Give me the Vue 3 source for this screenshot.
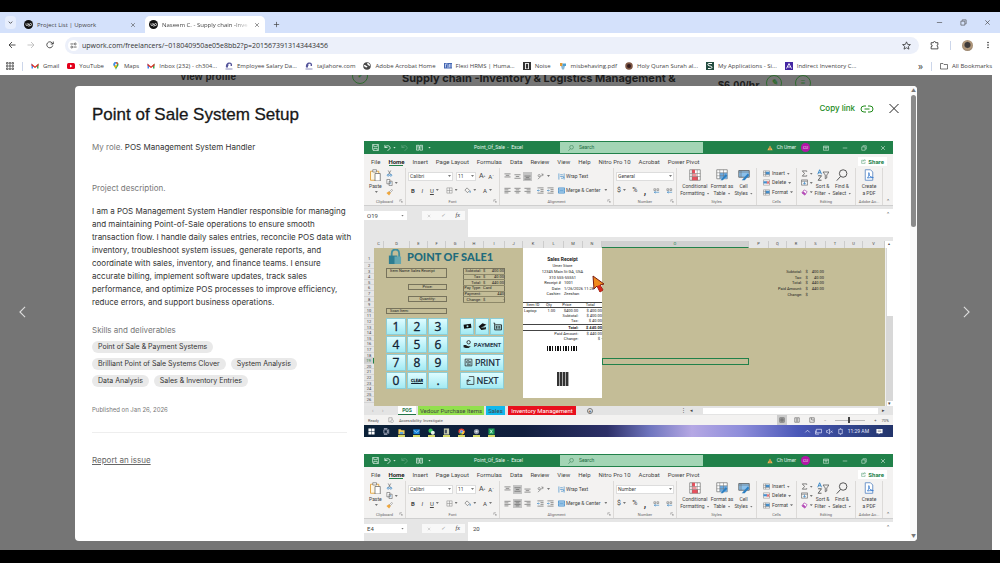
<script setup>
const icons = {
  apps: '<path d="M1 1h3v3H1zM6.500 1h3v3h-3zM12 1h3v3h-3zM1 6.500h3v3H1zM6.500 6.500h3v3h-3zM12 6.500h3v3h-3zM1 12h3v3H1zM6.500 12h3v3h-3zM12 12h3v3h-3z" fill="none" stroke="#333" stroke-width="1.300"/>',
  gmail: '<path d="M1 3v10h3V7z" fill="#4285f4"/><path d="M15 3v10h-3V7z" fill="#34a853"/><path d="M1 3l7 6 7-6v4l-7 5-7-5z" fill="#d93025"/>',
  youtube: '<rect y="2" width="16" height="12" rx="3" fill="#e3001b"/><path d="M6 5l5 3-5 3z" fill="#fff"/>',
  maps: '<path d="M8 0a5 5 0 0 0-5 5c0 4 4 5 5 11C9 10 13 9 13 5a5 5 0 0 0-5-5z" fill="#34a853"/><path d="M3 5a5 5 0 0 1 5-5v5l-4 4z" fill="#4285f4"/><path d="M8 0a5 5 0 0 1 4.500 3L9 6z" fill="#ea4335"/><path d="M4 9l4-4 2 3-3 4z" fill="#fbbc04"/><circle cx="8" cy="5" r="1.800" fill="#fff"/>',
  taj: '<path d="M2 11C1 5 4 1 9 1c4 0 6 3 5 7H6v3z" fill="#55559b"/><circle cx="9" cy="6" r="2.500" fill="#fff"/><path d="M1 13h14v2H1z" fill="#8d8dbd"/>',
  globe: '<circle cx="8" cy="8" r="7.500" fill="#484848"/><path d="M2 6c4-1 4 2 6 2s0 4-2 3-4-2-4-5zM9 2c4 0 5 3 5 5s-3 0-4-1-3-3-1-4z" fill="#fff"/>',
  flexi: '<path d="M0 2h16v11H0z" fill="#4365b0"/><path d="M3 11V4h4M8 12V5M11 4v7M14 4v7" stroke="#dbe5ff" stroke-width="1.500" fill="none"/>',
  noise: '<path d="M0 0h16v16H0z" fill="#333"/><path d="M4 3h8M5 3v10M11 3v10M4 13h3M9 13h3" stroke="#fff" stroke-width="1.700"/>',
  pdf: '<path d="M2 2h5v6H2z" fill="#e59a33"/><path d="M7 3h7v5H7z" fill="#4d9fd0"/><path d="M4 8h8l-2 7H6z" fill="#8bb8d5"/>',
  quran: '<circle cx="8" cy="8" r="7.500" fill="#7c5542"/><circle cx="8" cy="8" r="4" fill="#321b1d"/>',
  sims: '<path d="M0 0h16v16H0z" fill="#234d40"/><path d="M12 3H6C3 3 3 7 6 7.500l4 1c3 1 2 4.500-1 4.500H4" fill="none" stroke="#fff" stroke-width="2"/>',
  indirect: '<path d="M0 0h16v16H0z" fill="#4426a3"/><path d="M3 13L8 3l5 10M5 10h6" fill="none" stroke="#fff" stroke-width="1.800"/>',
  folder: '<path d="M1 3h5l2 2h7v9H1z" fill="none" stroke="#444" stroke-width="1.400"/>',
  up: '<circle cx="8" cy="8" r="8" fill="#111"/><path d="M3.500 6v2.500c0 2 3.500 2 3.500 0V6c1 2 2 3 2.500 3.500M8.500 12l1-4c.5-2.500 4-2.500 4 0s-3 2.500-4 .5" fill="none" stroke="#fff" stroke-width="1.300"/>',
  x: '<path d="M3 3l10 10M13 3L3 13" stroke="currentColor" stroke-width="1.500"/>',
  plus: '<path d="M8 2v12M2 8h12" stroke="currentColor" stroke-width="1.600"/>',
  min: '<path d="M2 8h12" stroke="currentColor" stroke-width="1.400"/>',
  max: '<path d="M2 5h9v9H2zM5 4V2h9v9h-2" fill="none" stroke="currentColor" stroke-width="1.400"/>',
  down: '<path d="M4 6l4 4 4-4" fill="none" stroke="currentColor" stroke-width="2"/>',
  back: '<path d="M15 8H2M8 2L2 8l6 6" fill="none" stroke="currentColor" stroke-width="1.700"/>',
  fwd: '<path d="M1 8h13M8 2l6 6-6 6" fill="none" stroke="currentColor" stroke-width="1.700"/>',
  reload: '<path d="M13.500 9A6 6 0 1 1 12 3.500L14 6M14.500 1v5h-5" fill="none" stroke="currentColor" stroke-width="1.700"/>',
  tune: '<path d="M1 4.500h7M8 11.500h7" stroke="#444" stroke-width="1.800"/><circle cx="12" cy="4.500" r="2.200" fill="none" stroke="#444" stroke-width="1.600"/><circle cx="4" cy="11.500" r="2.200" fill="none" stroke="#444" stroke-width="1.600"/>',
  star: '<path d="M8 1.500l2 4.500 5 .4-3.800 3.200 1.200 4.900L8 12l-4.400 2.500 1.200-4.900L1 6.400 6 6z" fill="none" stroke="currentColor" stroke-width="1.400"/>',
  ext: '<path d="M2 3h4c0-3 4-3 4 0h4v4c-2 0-2 3 0 3v4H2v-4c3 0 3-3 0-3z" fill="none" stroke="currentColor" stroke-width="1.500"/>',
  dots: '<circle cx="8" cy="3" r="1.400"/><circle cx="8" cy="8" r="1.400"/><circle cx="8" cy="13" r="1.400"/>',
  save: '<path d="M1 1h14v14H3l-2-2zM4 1v5h8V1M4 15v-5h8v5" fill="none" stroke="currentColor" stroke-width="1.500"/>',
  undo: '<path d="M2 2v6h6M2 8c3-6 12-5 12 1 0 3-3 4-6 6" fill="none" stroke="currentColor" stroke-width="1.800"/>',
  book: '<path d="M1 3h6v11H1zM9 3h6v11H9zM3 6h2M3 9h2M11 6h2M11 9h2M7 8h2" fill="none" stroke="currentColor" stroke-width="1.600"/>',
  search: '<circle cx="9.500" cy="6" r="5" fill="none" stroke="currentColor" stroke-width="1.200"/><path d="M6 10l-5 5.500" stroke="currentColor" stroke-width="1.200"/>',
  warn: '<path d="M8 1l7 13H1z" fill="#f4b35b"/><path d="M8 5v5M8 11v2" stroke="#5c3c00" stroke-width="1.500"/>',
  ribbon: '<path d="M1 3h14v11H1zM1 6h14M8 7v5M6 9l2-2 2 2" fill="none" stroke="currentColor" stroke-width="1.500"/>',
  share: '<path d="M9 4H2v10h11V9M6 9c0-4 3-5 8-5M11 1l3 3-3 3" fill="none" stroke="currentColor" stroke-width="1.300"/>',
  paste: '<path d="M2 3h11v12H2z" fill="#fdf6e3" stroke="#e2a33c" stroke-width="1.200"/><path d="M5 1h5v3H5z" fill="#fff" stroke="#777"/><path d="M8 6h7v10H8z" fill="#fff" stroke="#666"/>',
  cut: '<path d="M5 1l5 9M11 1L6 10" stroke="#555" stroke-width="1.300"/><circle cx="5" cy="12" r="2.200" fill="none" stroke="#2b7fc3" stroke-width="1.500"/><circle cx="11" cy="12" r="2.200" fill="none" stroke="#2b7fc3" stroke-width="1.500"/>',
  copy: '<path d="M2 1h7v10H2zM7 5h7v10H7z" fill="#fff" stroke="#555" stroke-width="1.300"/><path d="M9 8h3M9 11h3" stroke="#2b7fc3"/>',
  brush: '<path d="M1 9l6-4 4 4-4 6z" fill="#efa63c"/><path d="M8 6l5-5 2 2-5 5z" fill="#fff" stroke="#555"/>',
  left: '<path d="M1 3h14M1 6.500h9M1 10h14M1 13.500h9" stroke="#555" stroke-width="1.400"/>',
  center: '<path d="M1 3h14M4 6.500h8M1 10h14M4 13.500h8" stroke="#555" stroke-width="1.400"/>',
  right: '<path d="M1 3h14M6 6.500h9M1 10h14M6 13.500h9" stroke="#555" stroke-width="1.400"/>',
  top: '<path d="M1 2h14M4 5.500h8M1 9h14" stroke="#555" stroke-width="1.400"/>',
  mid: '<path d="M1 4h14M4 8h8M1 12h14" stroke="#555" stroke-width="1.400"/>',
  bot: '<path d="M1 7h14M4 10.500h8M1 14h14" stroke="#555" stroke-width="1.400"/>',
  orient: '<path d="M2 14L14 3M10 2l4 1-1 4" fill="none" stroke="#666" stroke-width="1.300"/><circle cx="5" cy="6" r="2.500" fill="none" stroke="#666" stroke-width="1.300"/>',
  indent: '<path d="M1 2h14M8 6h7M8 10h7M1 14h14" stroke="#555" stroke-width="1.400"/><path d="M6 8H1M3 6L1 8l2 2" fill="none" stroke="#2b7fc3" stroke-width="1.400"/>',
  wrap: '<path d="M2 1v14M14 1v14M5 4h6M5 8h6c3 0 3 4 0 4H7" fill="none" stroke="#2b7fc3" stroke-width="1.400"/>',
  merge: '<path d="M1 2h14v12H1z" fill="#cfe5f7" stroke="#2b7fc3" stroke-width="1.500"/><path d="M1 5h14M1 11h14M3 8h10" stroke="#2b7fc3" stroke-width="1.300"/>',
  borders: '<path d="M2 2h12v12H2zM8 2v12M2 8h12" fill="none" stroke="#888" stroke-width="1.200"/>',
  fill: '<path d="M7 2l6 6-5 5-6-6z" fill="none" stroke="#555" stroke-width="1.300"/><path d="M14 9v4" stroke="#2b7fc3" stroke-width="2"/>',
  dec: '<path d="M2 4h4v4H2zM9 4h4v4H9z" fill="none" stroke="#666" stroke-width="1.200"/><path d="M14 12H3M6 10l-3 2 3 2" fill="none" stroke="#2b7fc3" stroke-width="1.400"/>',
  cond: '<path d="M1 1h14v14H1z" fill="#fff" stroke="#777"/><path d="M4 1h4v5H4zM4 10h8v5H4z" fill="#e84f5c"/><path d="M4 6h6v4H4z" fill="#f2949b"/><path d="M1 6h14M1 10h14M4 1v14M11 1v14" stroke="#777" stroke-width=".7"/>',
  fmt: '<path d="M1 1h14v12H1z" fill="#fff" stroke="#777"/><path d="M5 5h10v8H5z" fill="#6ba9df"/><path d="M1 5h14M1 9h14M5 1v12M10 1v12" stroke="#777" stroke-width=".7"/><path d="M13 7l2 2-6 6H6z" fill="#2b7fc3"/>',
  cell: '<path d="M1 2h14v9H1z" fill="#8bc0ea" stroke="#555"/><path d="M13 6l2 2-6 7H5z" fill="#2b7fc3"/><path d="M1 4h14M4 2v9" stroke="#666" stroke-width=".7"/>',
  ins: '<path d="M1 2h14v12H1z" fill="#fff" stroke="#666"/><path d="M6 4h9v6H6z" fill="#4390cf"/><path d="M1 6h6M1 10h14M6 2v12" stroke="#666"/>',
  del: '<path d="M1 2h14v12H1z" fill="#fff" stroke="#666"/><path d="M1 5h8v5H1z" fill="#4390cf"/><path d="M9 5l5 6M14 5l-5 6" stroke="#d13438" stroke-width="2"/>',
  sum: '<path d="M13 4V2H3l5 6-5 6h10v-2" fill="none" stroke="#444" stroke-width="1.500"/>',
  filldown: '<path d="M1 2h14v12H1zM1 5h14" fill="none" stroke="#555" stroke-width="1.300"/><path d="M8 6v6M5 9l3 3 3-3" fill="none" stroke="#2b7fc3" stroke-width="1.500"/>',
  erase: '<path d="M7 2l7 4-5 8-7-5z" fill="#fff" stroke="#a63aa8" stroke-width="1.500"/><path d="M5 5l6 5-2 4-7-5z" fill="#b54bb8"/>',
  sort: '<path d="M1 7l2.500-6L6 7M2 5h3" fill="none" stroke="#2b7fc3" stroke-width="1.200"/><path d="M1.500 9H6l-4.500 6H6" fill="none" stroke="#555" stroke-width="1.200"/><path d="M8 4h8l-3 4v4l-2 1V8z" fill="none" stroke="#555"/>',
  pdfnew: '<path d="M3 1h7l3 3v11H3z" fill="#fff" stroke="#6d94c9" stroke-width="1.300"/><path d="M6 12c2-3 3-6 2-7s-1 5 4 6-2 0-6 1z" fill="none" stroke="#3d7fd0" stroke-width="1.200"/>',
  launch: '<path d="M3 3v8M3 3h9M7 7l6 6M13 8v5H8" fill="none" stroke="#666" stroke-width="1.500"/>',
  lock: '<path d="M5 9V5c0-6 8-6 8 0v4" fill="none" stroke="#418f9f" stroke-width="2"/><path d="M2 7h9v9H2z" fill="#2e7d91"/><path d="M8 8h7v8H8z" fill="#64a6b0"/>',
  cash: '<path d="M1 5l13-2 1 7-13 2z" fill="#111"/><circle cx="8" cy="7.500" r="1.800" fill="#a9e6ee"/>',
  cards: '<path d="M1 8l7-6 7 3-6 3H6l8 1v4l-8 1z" fill="#111"/><path d="M6 10h7" stroke="#bdf0f5"/>',
  cart: '<path d="M1 2h2v12h12V5H4M6 7v5M9 7v5M12 7v5" fill="none" stroke="#111" stroke-width="1.500"/>',
  pay: '<circle cx="10" cy="4" r="3" fill="none" stroke="#222" stroke-width="1.500"/><path d="M1 9h4l4 2h5l-4 3H5l-4-1z" fill="#222"/>',
  print: '<path d="M2 2h12v12H2zM5 5h4v4H5zM5 12h7M11 5v5" fill="none" stroke="#222" stroke-width="1.300"/>',
  next: '<path d="M5 1h9v14H2V8h6M5 5L2 8l3 3" fill="none" stroke="#222" stroke-width="1.300"/>',
  grid: '<path d="M2 2h12v12H2zM2 6h12M2 10h12M6 2v12M10 2v12" fill="none" stroke="#444" stroke-width="1.300"/>',
  pageview: '<path d="M2 2h12v12H2zM5 5h6M5 8h6M5 11h6" fill="none" stroke="#444" stroke-width="1.400"/>',
  breakv: '<path d="M2 2h12v12H2zM7 2v6h7" fill="none" stroke="#444" stroke-width="1.400"/>',
  win: '<path d="M1 1h6.500v6.500H1zM8.500 1H15v6.500H8.500zM1 8.500h6.500V15H1zM8.500 8.500H15V15H8.500z" fill="#fff"/>',
  task: '<path d="M2 4h8v8H2zM13 3v10M2 1h8M2 15h8" fill="none" stroke="#dde" stroke-width="1.500"/>',
  files: '<path d="M1 3h5l2 2h7v9H1z" fill="#f6cf57"/><path d="M4 9h8v5H4z" fill="#5da7dd"/>',
  mail: '<path d="M1 3h14v11H1z" fill="#1683d8"/><path d="M1 5l7 5 7-5" fill="none" stroke="#cfeaff" stroke-width="1.500"/>',
  chat: '<circle cx="6" cy="6" r="5" fill="#37c25e"/><circle cx="11" cy="11" r="4.500" fill="#e6f6ea"/>',
  note: '<path d="M2 1h12v14H2z" fill="#c9cdb0"/><path d="M4 4h5v8H4z" fill="#4a5664"/>',
  chrome: '<circle cx="8" cy="8" r="7" fill="#e34133"/><path d="M8 8L2 12a7 7 0 0 0 7 3z" fill="#2ea44f"/><path d="M8 8l7-2a7 7 0 0 1-6 9z" fill="#fbc02d"/><circle cx="8" cy="8" r="3" fill="#4285f4" stroke="#fff"/>',
  gear: '<circle cx="8" cy="8" r="6" fill="#8d98a8"/><circle cx="8" cy="8" r="2.500" fill="#e9edf2"/>',
  xl: '<path d="M1 1h14v14H1z" fill="#1b9a56"/><path d="M5 4l5 8M10 4l-5 8" stroke="#d7ffe8" stroke-width="1.800"/>',
  caretup: '<path d="M3 10l5-5 5 5" fill="none" stroke="currentColor" stroke-width="1.500"/>',
  monitor: '<path d="M3 3h12v8H3zM1 6v8h8" fill="none" stroke="currentColor" stroke-width="1.500"/>',
  sound: '<path d="M1 6h3l4-4v12l-4-4H1zM10 6l5 5M15 6l-5 5" fill="none" stroke="currentColor" stroke-width="1.400"/>',
  power: '<path d="M4 3h8v10H4zM7 1h2M7 15h2" fill="none" stroke="currentColor" stroke-width="1.500"/>',
  notif: '<path d="M1 2h14v10H9l-3 3v-3H1z" fill="#fff"/><path d="M4 5h8M4 8h8" stroke="#445"/>',
  access: '<path d="M2 2h9v11H2z" fill="none" stroke="#777" stroke-width="1.200"/><circle cx="11" cy="11" r="3.500" fill="#fff" stroke="#777" stroke-width="1.200"/>',
}

const bookmarks = [
  ['gmail', 'Gmail'], ['youtube', 'YouTube'], ['maps', 'Maps'], ['gmail', 'Inbox (232) - ch304...'],
  ['taj', 'Employee Salary Da...'], ['taj', 'tajlahore.com'], ['globe', 'Adobe Acrobat Home'],
  ['flexi', 'Flexi HRMS | Huma...'], ['noise', 'Noise'], ['pdf', 'misbehaving.pdf'],
  ['quran', 'Holy Quran Surah al...'], ['sims', 'My Applications - Si...'], ['indirect', 'Indirect Inventory C...'],
]
const description = [
  'I am a POS Management System Handler responsible for managing',
  'and maintaining Point-of-Sale operations to ensure smooth',
  'transaction flow. I handle daily sales entries, reconcile POS data with',
  'inventory, troubleshoot system issues, generate reports, and',
  'coordinate with sales, inventory, and finance teams. I ensure',
  'accurate billing, implement software updates, track sales',
  'performance, and optimize POS processes to improve efficiency,',
  'reduce errors, and support business operations.',
].join('\n')
const skills = ['Point of Sale & Payment Systems', 'Brilliant Point of Sale Systems Clover', 'System Analysis', 'Data Analysis', 'Sales & Inventory Entries']
const menus = ['File', 'Home', 'Insert', 'Page Layout', 'Formulas', 'Data', 'Review', 'View', 'Help', 'Nitro Pro 10', 'Acrobat', 'Power Pivot']
const shots = [
  { cell: 'O19', formula: '', format: 'General', valign: 'bot', halign: '', sheet: true },
  { cell: 'E4', formula: '20', format: 'Number', valign: 'mid', halign: 'center', sheet: false },
]
const columns = 'CDEFGHIJKLMNOPQRSTUV'.split('')
const keys = ['1', '2', '3', '4', '5', '6', '7', '8', '9', '0', 'CLEAR', '.']
const posTotals = [['Subtotal:', '$', '400.00'], ['Tax:', '$', '40.00'], ['Total:', '$', '440.00'], ['Pay Type:', 'Card', ''], ['Payment:', '', '440'], ['Change:', '$', '-']]
const sideTotals = [['Subtotal:', '$', '400.00'], ['Tax:', '$', '40.00'], ['Total:', '$', '440.00'], ['Paid Amount:', '$', '440.00'], ['Change:', '$', '']]
const receiptTotals = [['Subtotal:', '$ 400.00'], ['Tax:', '$ 40.00'], ['Total:', '$ 440.00'], ['Paid Amount:', '$ 440.00'], ['Change:', '$ -']]
const taskApps = ['win', 'task', 'files', 'mail', 'chat', 'note', 'chrome', 'gear', 'xl']
</script>

<template>
  <div class="screen">
    <header class="browser">
      <div class="tabstrip">
        <button class="tabmenu" aria-label="Search tabs"><svg viewBox="0 0 16 16" v-html="icons.down" /></button>
        <div class="tab">
          <svg class="fav" viewBox="0 0 16 16" v-html="icons.up" /><span>Project List | Upwork</span>
          <button aria-label="Close tab"><svg viewBox="0 0 16 16" v-html="icons.x" /></button>
        </div>
        <div class="tab active">
          <svg class="fav" viewBox="0 0 16 16" v-html="icons.up" /><span>Naseem C. - Supply chain -Inve</span>
          <button aria-label="Close tab"><svg viewBox="0 0 16 16" v-html="icons.x" /></button>
        </div>
        <button class="newtab" aria-label="New tab"><svg viewBox="0 0 16 16" v-html="icons.plus" /></button>
        <div class="winctl">
          <button v-for="i in ['min', 'max', 'x']" :key="i" :aria-label="i"><svg viewBox="0 0 16 16" v-html="icons[i]" /></button>
        </div>
      </div>
      <div class="toolbar">
        <button aria-label="Back"><svg viewBox="0 0 16 16" v-html="icons.back" /></button>
        <button class="dim" aria-label="Forward"><svg viewBox="0 0 16 16" v-html="icons.fwd" /></button>
        <button aria-label="Reload"><svg viewBox="0 0 16 16" v-html="icons.reload" /></button>
        <div class="omnibox">
          <span class="site"><svg viewBox="0 0 16 16" v-html="icons.tune" /></span>
          <input aria-label="Address" value="upwork.com/freelancers/~018040950ae05e8bb2?p=2015673913143443456" />
          <button aria-label="Bookmark"><svg viewBox="0 0 16 16" v-html="icons.star" /></button>
        </div>
        <button class="ext" aria-label="Extensions"><svg viewBox="0 0 16 16" v-html="icons.ext" /></button>
        <i class="bar" />
        <button class="avatar" aria-label="Profile" />
        <button aria-label="Menu"><svg viewBox="0 0 16 16" v-html="icons.dots" /></button>
      </div>
      <nav class="bookmarks">
        <svg viewBox="0 0 16 16" v-html="icons.apps" /><i class="bar" />
        <a v-for="b in bookmarks" :key="b[1]" href="#"><svg viewBox="0 0 16 16" v-html="icons[b[0]]" />{{ b[1] }}</a>
        <span class="more">»</span><i class="bar" />
        <a href="#"><svg viewBox="0 0 16 16" v-html="icons.folder" />All Bookmarks</a>
      </nav>
    </header>

    <main class="page">
      <div class="under">
        <b class="vp">View profile</b>
        <i class="ring">✓</i>
        <b class="job">Supply chain -Inventory &amp; Logistics Management &amp;</b>
        <b class="rate">$6.00/hr</b>
        <i class="ring">✎</i><i class="ring">≡</i>
      </div>
      <button class="nav prev" aria-label="Previous"><svg viewBox="0 0 8 14"><path d="M7 1L1 7l6 6" /></svg></button>
      <button class="nav next" aria-label="Next"><svg viewBox="0 0 8 14"><path d="M1 1l6 6-6 6" /></svg></button>

      <section class="modal" role="dialog" aria-labelledby="title">
        <div class="body">
          <header class="head">
            <h1 id="title">Point of Sale System Setup</h1>
            <a href="#" class="copy">Copy link
              <svg viewBox="0 0 28 16"><path d="M12 2H8a6 6 0 0 0 0 12h4M16 2h4a6 6 0 0 1 0 12h-4M9 8h10" /></svg>
            </a>
            <button class="close" aria-label="Close"><svg viewBox="0 0 20 20"><path d="M1 1l18 18M19 1L1 19" /></svg></button>
          </header>
          <div class="cols">
            <div class="info">
              <p class="role"><span>My role.</span> POS Management System Handler</p>
              <h2>Project description.</h2>
              <p class="desc">{{ description }}</p>
              <h3>Skills and deliverables</h3>
              <ul class="chips"><li v-for="s in skills" :key="s">{{ s }}</li></ul>
              <p class="pub">Published on Jan 26, 2026</p>
              <hr />
              <a href="#" class="report">Report an issue</a>
            </div>

            <div class="gallery">
              <figure v-for="(s, n) in shots" :key="n" class="excel">
                <div class="xtitle">
                  <div class="quick">
                    <svg viewBox="0 0 16 16" v-html="icons.save" /><svg viewBox="0 0 16 16" v-html="icons.undo" /><i class="v" />
                    <svg class="faint" viewBox="0 0 16 16" v-html="icons.undo" /><svg class="bk" viewBox="0 0 16 16" v-html="icons.book" /><i class="v" />
                  </div>
                  <span class="doc">Point_Of_Sale&nbsp; -&nbsp; Excel</span>
                  <label class="find"><svg viewBox="0 0 16 16" v-html="icons.search" /><input aria-label="Search" placeholder="Search" /></label>
                  <div class="acct">
                    <svg viewBox="0 0 16 16" v-html="icons.warn" /><span>Ch Umer</span><b>CU</b>
                    <svg viewBox="0 0 16 16" v-html="icons.ribbon" /><svg viewBox="0 0 16 16" v-html="icons.min" /><svg viewBox="0 0 16 16" v-html="icons.max" /><svg viewBox="0 0 16 16" v-html="icons.x" />
                  </div>
                </div>
                <div class="menus">
                  <button v-for="m in menus" :key="m" :class="{ on: m === 'Home' }">{{ m }}</button>
                  <button class="sharebtn"><svg viewBox="0 0 16 16" v-html="icons.share" />Share</button>
                </div>
                <div class="ribbon">
                  <div class="g g-clip">
                    <div class="in">
                      <button class="big"><svg viewBox="0 0 16 16" v-html="icons.paste" />Paste<i class="v" /></button>
                      <div class="stack">
                        <span><svg viewBox="0 0 16 16" v-html="icons.cut" /></span>
                        <span><svg viewBox="0 0 16 16" v-html="icons.copy" /><i class="v" /></span>
                        <span><svg viewBox="0 0 16 16" v-html="icons.brush" /></span>
                      </div>
                    </div>
                    <small>Clipboard<svg viewBox="0 0 16 16" v-html="icons.launch" /></small>
                  </div>
                  <div class="g g-font">
                    <div class="rows">
                      <div class="r"><span class="combo wide">Calibri<i class="v" /></span><span class="combo">11<i class="v" /></span><button class="A">A<sup>^</sup></button><button class="A sm">A<sup>ˇ</sup></button></div>
                      <div class="r sp"><button><b>B</b></button><button><em>I</em></button><button><u>U</u><i class="v" /></button><button><svg viewBox="0 0 16 16" v-html="icons.borders" /><i class="v" /></button><button><svg viewBox="0 0 16 16" v-html="icons.fill" /><i class="v" /></button><button>A<i class="v" /></button></div>
                    </div>
                    <small>Font<svg viewBox="0 0 16 16" v-html="icons.launch" /></small>
                  </div>
                  <div class="g g-align">
                    <div class="rows">
                      <div class="r al"><svg v-for="a in ['top', 'mid', 'bot']" :key="a" :class="{ sel: s.valign === a }" viewBox="0 0 16 16" v-html="icons[a]" /><svg class="gap" viewBox="0 0 16 16" v-html="icons.orient" /><i class="v" /><button class="lbl wr"><svg viewBox="0 0 16 16" v-html="icons.wrap" />Wrap Text</button></div>
                      <div class="r al"><svg v-for="a in ['left', 'center', 'right']" :key="a" :class="{ sel: s.halign === a }" viewBox="0 0 16 16" v-html="icons[a]" /><svg class="gap" viewBox="0 0 16 16" v-html="icons.indent" /><svg viewBox="0 0 16 16" v-html="icons.indent" /><button class="lbl"><svg viewBox="0 0 16 16" v-html="icons.merge" />Merge &amp; Center<i class="v" /></button></div>
                    </div>
                    <small>Alignment<svg viewBox="0 0 16 16" v-html="icons.launch" /></small>
                  </div>
                  <div class="g g-num">
                    <div class="rows">
                      <div class="r"><span class="combo full">{{ s.format }}<i class="v" /></span></div>
                      <div class="r sp num"><button>$<i class="v" /></button><button>%</button><button class="comma">,</button><svg viewBox="0 0 16 16" v-html="icons.dec" /><svg viewBox="0 0 16 16" v-html="icons.dec" /></div>
                    </div>
                    <small>Number<svg viewBox="0 0 16 16" v-html="icons.launch" /></small>
                  </div>
                  <div class="g g-style">
                    <div class="in even">
                      <button class="big"><svg viewBox="0 0 16 16" v-html="icons.cond" />Conditional<span>Formatting<i class="v" /></span></button>
                      <button class="big"><svg viewBox="0 0 16 16" v-html="icons.fmt" />Format as<span>Table<i class="v" /></span></button>
                      <button class="big"><svg viewBox="0 0 16 16" v-html="icons.cell" />Cell<span>Styles<i class="v" /></span></button>
                    </div>
                    <small>Styles</small>
                  </div>
                  <div class="g g-cells">
                    <div class="stack lab">
                      <span><svg viewBox="0 0 16 16" v-html="icons.ins" />Insert<i class="v" /></span>
                      <span><svg viewBox="0 0 16 16" v-html="icons.del" />Delete<i class="v" /></span>
                      <span><svg viewBox="0 0 16 16" v-html="icons.ins" />Format<i class="v" /></span>
                    </div>
                    <small>Cells</small>
                  </div>
                  <div class="g g-edit">
                    <div class="in even">
                      <div class="stack">
                        <span><svg viewBox="0 0 16 16" v-html="icons.sum" /><i class="v" /></span>
                        <span><svg viewBox="0 0 16 16" v-html="icons.filldown" /><i class="v" /></span>
                        <span><svg viewBox="0 0 16 16" v-html="icons.erase" /><i class="v" /></span>
                      </div>
                      <button class="big"><svg viewBox="0 0 16 16" v-html="icons.sort" />Sort &amp;<span>Filter<i class="v" /></span></button>
                      <button class="big"><svg viewBox="0 0 16 16" v-html="icons.search" />Find &amp;<span>Select<i class="v" /></span></button>
                    </div>
                    <small>Editing</small>
                  </div>
                  <div class="g g-adobe">
                    <div class="in even"><button class="big"><svg viewBox="0 0 16 16" v-html="icons.pdfnew" />Create<span>a PDF</span></button></div>
                    <small>Adobe Ac...</small>
                  </div>
                  <div class="collapse">⌃</div>
                </div>
                <div class="fbar">
                  <span class="name">{{ s.cell }}<i class="v" /></span>
                  <span class="fx"><svg viewBox="0 0 16 16" v-html="icons.x" /><em>✓</em><em class="f">fx</em></span>
                  <span class="formula">{{ s.formula }}</span>
                  <span class="fup">⌃</span>
                </div>

                <template v-if="s.sheet">
                  <div class="colhead">
                    <i class="corner" />
                    <div class="letters"><span v-for="c in columns" :key="c" :class="{ cur: c === 'O' }">{{ c }}</span></div>
                    <i class="sbup">▴</i>
                  </div>
                  <div class="sheet">
                    <div class="rownums"><span v-for="r in 26" :key="r" :class="{ cur: r === 19 }">{{ r }}</span></div>
                    <div class="canvas">
                      <div class="pos">
                        <div class="postitle"><svg viewBox="0 0 16 16" v-html="icons.lock" /><b>POINT OF SALE1</b></div>
                        <div class="fields">
                          <div class="f1">
                            <span class="tall">Item Name Sales Receipt</span>
                            <span class="half">Price:</span>
                            <span class="half">Quantity:</span>
                            <span>Scan Item:</span>
                          </div>
                          <table class="tot">
                            <tbody><tr v-for="t in posTotals" :key="t[0]"><td>{{ t[0] }}</td><td>{{ t[1] }}</td><td>{{ t[2] }}</td></tr></tbody>
                          </table>
                        </div>
                        <div class="pads">
                          <div class="keys"><button v-for="k in keys" :key="k" :class="{ clear: k === 'CLEAR' }">{{ k }}</button></div>
                          <div class="acts">
                            <button v-for="i in ['cash', 'cards', 'cart']" :key="i" :aria-label="i"><svg viewBox="0 0 16 16" v-html="icons[i]" /></button>
                            <button class="w pay"><svg viewBox="0 0 16 16" v-html="icons.pay" />PAYMENT</button>
                            <button class="w"><svg viewBox="0 0 16 16" v-html="icons.print" />PRINT</button>
                            <button class="w"><svg viewBox="0 0 16 16" v-html="icons.next" />NEXT</button>
                          </div>
                        </div>
                      </div>
                      <div class="receipt">
                        <b>Sales Receipt</b>
                        <div class="rc"><span>Umer Store</span><span>12345 Main St GA, USA</span><span>310 555-55551</span></div>
                        <dl><dt>Receipt #</dt><dd>1001</dd><dt>Date:</dt><dd>1/26/2026 11:28</dd><dt>Cashier:</dt><dd>Zeeshan</dd></dl>
                        <table>
                          <thead><tr><th>Item ID</th><th>Qty</th><th>Price</th><th>Total</th></tr></thead>
                          <tbody>
                            <tr><td>Laptop</td><td>1.00</td><td>$400.00</td><td>$ 400.00</td></tr>
                            <tr v-for="t in receiptTotals" :key="t[0]" :class="{ sum: t[0] === 'Total:' }"><td /><td class="k" colspan="2">{{ t[0] }}</td><td>{{ t[1] }}</td></tr>
                          </tbody>
                        </table>
                        <i class="bars" /><i class="block" />
                        <svg class="cursor" viewBox="0 0 12 18"><path d="M1 1l1 13 3-3 3 6 3-2-3-5 4-1z" fill="#f08a1d" stroke="#7b1d12" /><path d="M8 9l3 0M5 11l3 6 3-2-3-5z" fill="#d3261c" /></svg>
                      </div>
                      <div class="rest">
                        <i class="selbox" />
                        <table class="side"><tbody><tr v-for="t in sideTotals" :key="t[0]"><td>{{ t[0] }}</td><td>{{ t[1] }}</td><td>{{ t[2] }}</td></tr></tbody></table>
                      </div>
                    </div>
                    <div class="vscroll"><i /><span>▾</span></div>
                  </div>
                  <div class="sheettabs">
                    <span class="arr">‹</span><span class="arr">›</span>
                    <button class="t1">POS</button><button class="t2">Vedour Purchase Items</button><button class="t3">Sales</button><button class="t4">Inventory Management</button>
                    <span class="addtab">+</span>
                    <div class="hs"><em>⋮</em><em>◂</em><i /><em>▸</em></div>
                  </div>
                  <div class="status">
                    <span>Ready</span><svg viewBox="0 0 16 16" v-html="icons.access" /><span>Accessibility: Investigate</span>
                    <div class="views">
                      <svg class="on" viewBox="0 0 16 16" v-html="icons.grid" /><svg viewBox="0 0 16 16" v-html="icons.pageview" /><svg viewBox="0 0 16 16" v-html="icons.breakv" />
                      <span>−</span><i class="slider" /><span>+</span><span class="pct">70%</span>
                    </div>
                  </div>
                  <div class="taskbar">
                    <svg v-for="(a, k) in taskApps" :key="a" :class="{ run: k > 1 }" viewBox="0 0 16 16" v-html="icons[a]" />
                    <div class="tray">
                      <svg viewBox="0 0 16 16" v-html="icons.caretup" /><svg viewBox="0 0 16 16" v-html="icons.monitor" /><svg viewBox="0 0 16 16" v-html="icons.sound" /><svg viewBox="0 0 16 16" v-html="icons.power" />
                      <span>11:29 AM</span><svg viewBox="0 0 16 16" v-html="icons.notif" />
                    </div>
                  </div>
                </template>
              </figure>
            </div>
          </div>
        </div>
        <div class="mscroll"><span>▲</span><i /><span class="dn">▼</span></div>
      </section>
    </main>
  </div>
</template>

<style>
html, body { margin: 0; background: #000; overflow: hidden; }
</style>

<style scoped>
* { box-sizing: border-box; }
.screen { height: 100vh; padding: 12px 0 13px; display: flex; flex-direction: column; background: #000; font-family: "Open Sans", "Noto Sans", sans-serif; color: #333; }
button { all: unset; box-sizing: border-box; display: flex; align-items: center; justify-content: center; cursor: pointer; }
input { border: 0; padding: 0; background: none; font: inherit; color: inherit; min-width: 0; outline: 0; }
svg { flex: none; display: block; }
a { color: inherit; text-decoration: none; }
p, h1, h2, h3, ul, figure, dl, dd { margin: 0; padding: 0; font-weight: 400; }
table { border-collapse: collapse; }
td, th { padding: 0; font-weight: 400; }
.bar { width: 1px; height: 9px; background: #ccd6ea; }

.tabstrip { display: flex; align-items: flex-end; height: 21px; background: #d4e1fb; padding: 0 4px 0 5px; color: #444; font-size: 6px; }
.tabmenu { width: 11px; height: 13px; border-radius: 4px; background: #e7eefd; align-self: center; }
.tabmenu svg { width: 7px; }
.tab { display: flex; align-items: center; gap: 4px; width: 129px; height: 17px; padding: 0 9px 0 8px; border-radius: 5px 5px 0 0; }
.tab span { flex: 1; white-space: nowrap; }
.tab .fav { width: 9px; }
.tab button svg { width: 6px; }
.tab.active { background: #fff; width: 120px; padding: 0 5px 0 4px; }
.tab.active span { mask-image: linear-gradient(90deg, #000 80%, transparent); }
.newtab { width: 22px; height: 17px; }
.newtab svg { width: 7px; }
.winctl { margin-left: auto; display: flex; gap: 17px; align-self: center; padding-right: 5px; }
.winctl svg { width: 7px; }

.toolbar { display: flex; align-items: center; gap: 11px; height: 24px; padding: 0 8px; background: #fff; }
.toolbar > button svg { width: 8px; height: 8px; }
.toolbar .dim { color: #bbb; }
.omnibox { flex: 1; display: flex; align-items: center; height: 17px; border-radius: 9px; background: #ecf0fa; padding: 0 8px 0 3px; font-size: 7px; }
.omnibox .site { width: 11px; height: 11px; border-radius: 6px; background: #fff; display: grid; place-items: center; margin-right: 3px; }
.omnibox .site svg { width: 7px; }
.omnibox input { flex: 1; }
.omnibox button svg { width: 9px; }
.toolbar .ext svg { width: 9px; height: 9px; }
.avatar { width: 11px; height: 11px; border-radius: 50%; background: radial-gradient(circle at 50% 45%, #3d3a3a 30%, #b59b7d 45%, #7e6f60); }

.bookmarks { display: flex; align-items: center; height: 18px; padding: 0 8px 0 6px; gap: 8px; background: #fff; font-size: 6px; white-space: nowrap; color: #444; }
.bookmarks a { display: flex; align-items: center; gap: 4px; }
.bookmarks svg { width: 8px; height: 8px; }
.bookmarks .more { margin-left: auto; font-size: 10px; }

.page { position: relative; flex: 1; min-height: 0; background: #757575; border-right: 8px solid #fff; padding: 11px 75px 9px; }
.under { position: absolute; inset: 0 0 auto; height: 16px; overflow: hidden; display: flex; align-items: flex-start; padding-left: 180px; color: #1d1d1d; font: 700 11px/8px "Liberation Sans", sans-serif; white-space: nowrap; }
.under .vp { width: 172px; font-size: 10px; line-height: 3px; }
.under .job { margin-left: 34px; width: 316px; font: 700 11px/7px Inter, sans-serif; }
.under .rate { width: 48px; line-height: 20px; }
.ring { width: 16px; height: 16px; border: 1px solid #2f6b2f; border-radius: 50%; font-size: 8px; line-height: 13px; text-align: center; color: #2f6b2f; margin-right: 13px; flex: none; }
.under .vp + .ring { margin: -7px 0 0; }
.nav { position: absolute; top: 231px; }
.nav svg { width: 7px; height: 12px; fill: none; stroke: #ddd; stroke-width: 1.3; }
.prev { left: 19px; }
.next { right: 22px; }

.modal { position: relative; height: 100%; display: flex; background: #fff; border-radius: 4px; overflow: hidden; font-family: Inter, "Liberation Sans", sans-serif; }
.body { flex: 1; min-width: 0; padding: 0 11px 0 17px; }
.head { display: flex; align-items: flex-start; height: 55px; padding-top: 17px; }
h1 { flex: 1; font: 400 17px/24px "Liberation Sans", sans-serif; color: #181818; -webkit-text-stroke: .3px #181818; }
.copy { display: flex; align-items: center; gap: 5px; color: #208a1a; font-size: 8px; font-weight: 500; line-height: 11px; }
.copy svg { width: 14px; height: 8px; fill: none; stroke: #208a1a; stroke-width: 2; }
.close { margin-left: 15px; }
.close svg { width: 10px; height: 11px; stroke: #222; stroke-width: 2; }
.cols { display: grid; grid-template-columns: 255px minmax(0, 1fr); gap: 17px; padding-right: 6px; }
.info { font-size: 8px; line-height: 12px; color: #333; }
.role span, h2, h3, .pub { color: #777; }
h2, h3 { font-size: 8px; }
h2 { margin-top: 29px; }
.desc { margin-top: 11px; line-height: 13px; white-space: pre; }
h3 { margin-top: 15px; }
.chips { list-style: none; display: flex; flex-wrap: wrap; gap: 5px; margin-top: 5px; }
.chips li { height: 12px; padding: 0 6px; border-radius: 6px; background: #e9e9e9; font-size: 7px; }
.pub { font-size: 6px; margin-top: 17px; line-height: 12px; }
hr { border: 0; border-top: 1px solid #eee; margin: 16px 0 21px; }
.report { font-size: 8px; color: #666; text-decoration: underline; }
.mscroll { width: 7px; display: flex; flex-direction: column; align-items: center; font-size: 5px; color: #777; background: #fafafa; line-height: 9px; }
.mscroll i { width: 5px; height: 132px; border-radius: 3px; background: #8a8a8a; }
.mscroll .dn { margin-top: auto; }

.gallery { display: flex; flex-direction: column; gap: 17px; font-family: Roboto, "Open Sans", sans-serif; }
.excel { background: #e6e6e6; font-size: 5px; line-height: 7px; color: #444; white-space: nowrap; }
.v { width: 3px; height: 2px; margin-left: 2px; flex: none; background: #777; clip-path: polygon(0 0, 100% 0, 50% 100%); }
.xtitle { display: flex; align-items: center; height: 13px; background: #21814a; color: #e7f4ec; }
.quick { display: flex; align-items: center; width: 110px; padding-left: 8px; gap: 5px; }
.quick svg { width: 7px; }
.quick .v { background: #cfe6d8; margin-left: -3px; }
.quick .faint { opacity: .3; }
.quick .bk { margin-left: 3px; }
.quick .bk + .v { margin-left: 0; }
.doc { width: 86px; }
.find { display: flex; align-items: center; gap: 5px; flex: 1; height: 11px; background: #a3d5b5; color: #216b40; padding-left: 8px; }
.find svg { width: 6px; }
.find input::placeholder { color: #216b40; }
.acct { width: 190px; display: flex; align-items: center; justify-content: flex-end; gap: 13px; padding-right: 7px; }
.acct svg { width: 6px; }
.acct span { margin-left: -9px; }
.acct b { width: 9px; height: 9px; margin-left: -8px; border-radius: 50%; background: #b415a8; font-weight: 400; font-size: 4px; line-height: 9px; text-align: center; }
.menus { display: flex; align-items: center; height: 14px; background: #f3f2f1; padding: 0 6px 0 7px; gap: 8px; font-size: 6px; }
.menus .on { font-weight: 700; box-shadow: 0 2px 0 -1px #21814a; color: #222; }
.menus .sharebtn { margin-left: auto; background: #fff; color: #21814a; font-weight: 700; padding: 0 3px; gap: 2px; height: 9px; }
.sharebtn svg { width: 5px; }
.ribbon { display: flex; height: 38px; background: #f3f2f1; border-bottom: 1px solid #cfcfcf; }
.g { position: relative; min-width: 0; display: flex; flex-direction: column; border-right: 1px solid #dcdad8; padding: 1px 2px 0; }
.g small { margin-top: auto; position: relative; display: flex; justify-content: center; font-size: 4px; line-height: 7px; color: #666; }
.g small svg { position: absolute; right: 0; top: 1px; width: 4px; }
.g-clip { flex: 42 1 42px; } .g-font { flex: 94 1 94px; } .g-align { flex: 114 1 114px; } .g-num { flex: 63 1 63px; } .g-style { flex: 80 1 80px; }
.g-cells { flex: 40 1 40px; } .g-edit { flex: 59 1 59px; } .g-adobe { flex: 27 1 27px; }
.collapse { width: 10px; align-self: flex-end; text-align: center; }
.in { display: flex; gap: 4px; }
.in.even { justify-content: space-evenly; gap: 0; }
.big { flex-direction: column; justify-content: flex-start; height: 28px; }
.big svg { width: 12px; height: 12px; margin-bottom: 2px; }
.big span { display: flex; align-items: center; }
.g-clip .big { padding-left: 3px; }
.g-clip .big .v { margin-top: 1px; }
.stack { display: flex; flex-direction: column; height: 28px; justify-content: space-around; }
.stack span { display: flex; align-items: center; }
.stack svg { width: 7px; height: 7px; }
.stack.lab { padding-left: 4px; }
.stack.lab svg { margin-right: 2px; }
.rows { display: flex; flex-direction: column; height: 26px; justify-content: space-between; padding: 2px 0 0; }
.r { display: flex; align-items: center; height: 10px; gap: 3px; }
.r svg { width: 7px; height: 7px; }
.combo { display: flex; align-items: center; justify-content: space-between; height: 9px; width: 20px; background: #fff; border: 1px solid #ddd; padding: 0 1px; }
.combo.wide { width: 45px; } .combo.full { flex: 1; }
.A { font-size: 7px; } .A.sm { font-size: 6px; } .A sup { font-size: 4px; }
.sp { justify-content: space-between; padding: 0 5px 0 3px; font-size: 6px; }
.num { padding: 0 1px; font-size: 7px; }
.comma { font-weight: 700; font-size: 10px; height: 10px; }
.al { gap: 3px; padding-left: 2px; }
.al > svg { width: 7px; }
.al .sel { background: #c4c4c4; outline: 1px solid #c4c4c4; }
.al .gap { margin-left: 3px; }
.al .v { margin-left: 0; }
.lbl { gap: 1px; margin-left: 1px; }
.al .wr { margin-left: 5px; }
.al .lbl .v { margin-left: 3px; }
.fbar { display: flex; height: 35px; padding: 3px 0 4px; align-items: flex-start; background: #e6e6e6; }
.name { width: 43px; height: 9px; display: flex; justify-content: space-between; align-items: center; background: #fff; padding: 0 3px; margin: 2px 15px 0 0; font-size: 6px; }
.fx { width: 43px; height: 9px; margin: 2px 3px 0 0; display: flex; align-items: center; justify-content: space-around; background: #f8f8f8; color: #999; }
.fx svg { width: 4px; } .fx .f { color: #333; font-family: "Liberation Serif", serif; font-size: 6px; }
.formula { flex: 1; align-self: stretch; background: #fff; padding: 3px 5px; font-size: 6px; }
.fup { width: 10px; align-self: stretch; background: #fff; padding-top: 2px; text-align: center; }
.excel:last-child .fbar { height: 60px; }

.colhead { display: flex; height: 7px; font-size: 4px; line-height: 6px; }
.corner { width: 10px; }
.letters { flex: 1; display: grid; grid-template-columns: 10fr 26fr 18fr 18fr 19fr 19fr 21fr 18fr 21fr 20fr 19fr 19fr 147fr 20fr 18fr 19fr 20fr 19fr 18fr 22fr; text-align: center; }
.letters span { border-right: 1px solid #ccc; }
.letters .cur { background: #d0d0d0; border-bottom: 1px solid #21814a; color: #21814a; }
.sbup { width: 8px; background: #fff; text-align: center; font-style: normal; }
.sheet { display: flex; height: 158px; }
.rownums { width: 10px; display: grid; grid-template-rows: 15px repeat(25, minmax(0, 1fr)); padding-bottom: 3px; font-size: 4px; line-height: 6px; text-align: center; }
.rownums span { border-bottom: 1px solid #d4d4d4; }
.rownums span:first-child { padding-top: 8px; }
.rownums .cur { background: #d0d0d0; border-right: 1px solid #21814a; color: #21814a; }
.canvas { flex: 1; display: grid; grid-template-columns: 149fr 79fr 283fr; background: #c4bd97; color: #222; }
.pos { padding: 1px 0 0 12px; }
.postitle { display: flex; align-items: center; gap: 5px; height: 15px; color: #1f6b7c; font: 700 11px/14px Lato, sans-serif; padding-left: 1px; }
.postitle svg { width: 15px; height: 15px; }
.fields { display: flex; justify-content: space-between; padding: 4px 18px 0 0; height: 54px; font-size: 4px; line-height: 5px; }
.f1 { width: 61px; display: flex; flex-direction: column; align-items: flex-end; gap: 6px; height: 46px; }
.f1 span { width: 100%; height: 6px; border: 1px solid #77735c; padding: 0 3px; line-height: 4px; }
.f1 .tall { height: 12px; }
.f1 .half { width: 39px; text-align: center; }
.tot { width: 42px; height: 35px; border: 1px solid #77735c; }
.tot tr { border-bottom: 1px solid #8d8869; }
.tot td { text-align: right; line-height: 4px; }
.tot td:nth-child(2) { text-align: left; padding-left: 2px; }
.pads { display: flex; justify-content: space-between; padding-right: 19px; }
.keys { display: grid; grid-template-columns: repeat(3, 20px); gap: 1px; }
.pads button { height: 17px; background: linear-gradient(#dffcff, #a2eaf3); border: 1px solid #8ccdd6; color: #123; font: 400 12px/14px "Open Sans", sans-serif; -webkit-text-stroke: .3px #123; }
.pads .clear { font-size: 4px; text-decoration: underline; }
.acts { display: grid; grid-template-columns: repeat(3, 14px); gap: 1px; }
.acts svg { width: 9px; height: 9px; }
.pads .w { grid-column: 1 / 4; gap: 2px; font-size: 9px; -webkit-text-stroke: .2px #123; }
.pads .pay { font-size: 6px; }
.receipt { position: relative; height: 150px; background: #fff; display: flex; flex-direction: column; align-items: center; font-size: 4px; line-height: 5px; padding-top: 7px; }
.receipt > b { font-size: 5px; line-height: 8px; }
.rc { display: flex; flex-direction: column; align-items: center; height: 17px; justify-content: space-between; }
.receipt dl { display: grid; grid-template-columns: 38px 1fr; column-gap: 3px; width: 100%; height: 17px; }
.receipt dt { text-align: right; }
.receipt table { width: 100%; height: 40px; margin-top: 5px; }
.receipt table tr { line-height: 4px; }
.receipt td { text-align: right; }
.receipt td:first-child { text-align: left; padding-left: 1px; }
.receipt thead tr, .receipt .sum { border-top: 1px solid #444; border-bottom: 1px solid #444; }
.receipt .sum td { font-weight: 700; }
.bars { width: 32px; height: 5px; margin-top: 4px; background: repeating-linear-gradient(90deg, #111 0 1px, #fff 1px 2px, #111 2px 4px, #fff 4px 5px, #111 5px 6px, #fff 6px 8px); }
.block { width: 12px; height: 14px; margin-top: 21px; background: repeating-linear-gradient(90deg, #333 0 2px, #aaa 2px 3px); }
.cursor { position: absolute; left: 69px; top: 27px; width: 12px; height: 18px; }
.rest { position: relative; font-size: 4px; line-height: 5px; }
.selbox { position: absolute; left: 0; top: 110px; width: 52%; height: 7px; border: 1px solid #21814a; }
.side { height: 28px; margin: 21px 61px 0 auto; width: 60px; }
.side td { text-align: right; }
.side td:nth-child(2) { text-align: center; width: 9px; }
.side td:nth-child(3) { width: 13px; }
.vscroll { width: 8px; background: #d8d8d8; display: flex; flex-direction: column; align-items: center; justify-content: space-between; border-left: 1px solid #eee; }
.vscroll i { width: 6px; height: 68px; background: #fff; }
.vscroll span { width: 6px; background: #fff; text-align: center; line-height: 5px; }
.sheettabs { display: flex; align-items: center; height: 9px; padding-left: 8px; font-size: 5px; background: #e4e4e4; }
.sheettabs .arr { width: 10px; color: #999; }
.sheettabs button { height: 9px; margin-right: 2px; line-height: 8px; font-size: 6px; }
.sheettabs .t1 { width: 18px; margin-left: 6px; background: #fff; color: #217346; font-weight: 700; border-bottom: 1px solid #217346; font-size: 5px; }
.sheettabs .t2 { width: 66px; background: #92e04d; }
.sheettabs .t3 { width: 19px; background: #10b8ec; }
.sheettabs .t4 { width: 68px; background: #e8101d; color: #fff; margin-left: 1px; }
.addtab { width: 6px; height: 6px; border: 1px solid #777; border-radius: 50%; line-height: 4px; text-align: center; margin-left: 9px; }
.hs { margin-left: auto; width: 212px; display: flex; align-items: center; gap: 4px; padding-right: 8px; }
.hs em { font-style: normal; }
.hs i { flex: 1; height: 6px; background: #fff; margin-left: 6px; }
.status { display: flex; align-items: center; height: 10px; gap: 5px; padding: 0 4px; background: #f3f2f1; font-size: 4px; color: #555; }
.status svg { width: 6px; height: 6px; }
.status > svg { margin-left: 4px; }
.views { margin-left: auto; display: flex; align-items: center; gap: 9px; }
.views .on { background: #ccc; outline: 2px solid #ccc; }
.slider { width: 30px; height: 6px; background: linear-gradient(#444, #444) 45% 0 / 2px 6px no-repeat, linear-gradient(#bbb, #bbb) 0 3px / 100% 1px no-repeat; }
.pct { margin-left: -4px; }
.taskbar { display: flex; align-items: center; gap: 8px; height: 12px; padding: 0 10px 0 4px; color: #e8eaff; font-size: 5px; background: linear-gradient(90deg, #0b2138, #111f3e 30%, #2d3068 46%, #6f75be 54%, #b5a8e4 62%, #8f8edb 71%, #4a58b8 82%, #2b3f80 95%, #23346a); }
.taskbar svg { width: 7px; height: 7px; }
.taskbar .run { box-shadow: 0 2px 0 #d5d96b; }
.tray { margin-left: auto; display: flex; align-items: center; gap: 4px; }
.tray svg:last-child { margin-left: 3px; }
</style>
